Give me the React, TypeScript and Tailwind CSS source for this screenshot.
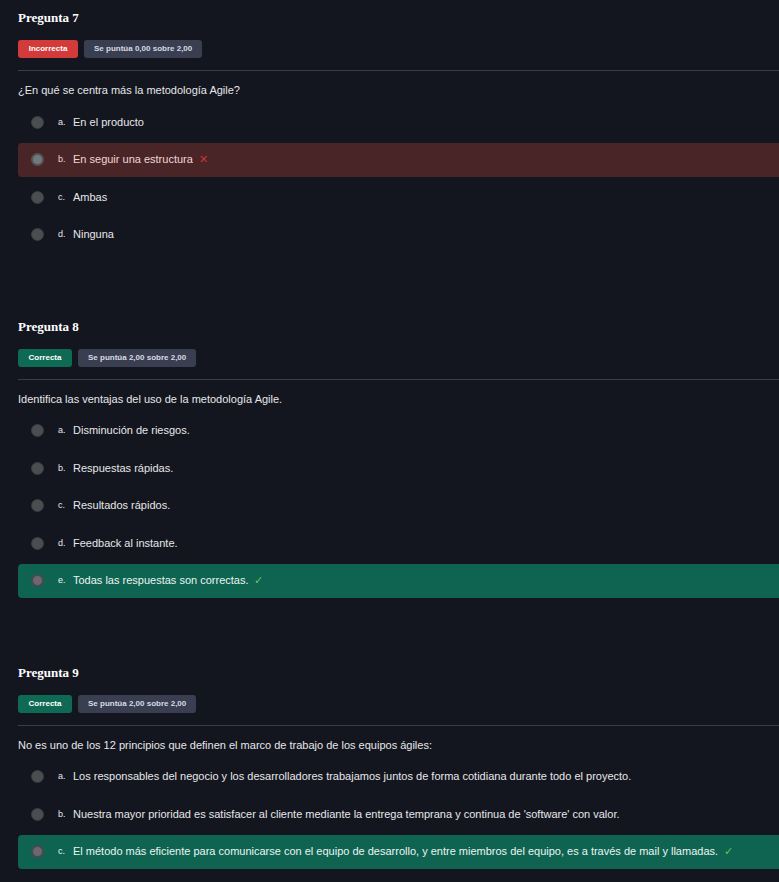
import React from "react";

type Option = { letter: string; text: string; state?: "wrong" | "right" };

type Question = {
  num: number;
  correct: boolean;
  grade: string;
  prompt: string;
  options: Option[];
};

const questions: Question[] = [
  {
    num: 7,
    correct: false,
    grade: "Se puntúa 0,00 sobre 2,00",
    prompt: "¿En qué se centra más la metodología Agile?",
    options: [
      { letter: "a.", text: "En el producto" },
      { letter: "b.", text: "En seguir una estructura", state: "wrong" },
      { letter: "c.", text: "Ambas" },
      { letter: "d.", text: "Ninguna" },
    ],
  },
  {
    num: 8,
    correct: true,
    grade: "Se puntúa 2,00 sobre 2,00",
    prompt: "Identifica las ventajas del uso de la metodología Agile.",
    options: [
      { letter: "a.", text: "Disminución de riesgos." },
      { letter: "b.", text: "Respuestas rápidas." },
      { letter: "c.", text: "Resultados rápidos." },
      { letter: "d.", text: "Feedback al instante." },
      { letter: "e.", text: "Todas las respuestas son correctas.", state: "right" },
    ],
  },
  {
    num: 9,
    correct: true,
    grade: "Se puntúa 2,00 sobre 2,00",
    prompt: "No es uno de los 12 principios que definen el marco de trabajo de los equipos ágiles:",
    options: [
      {
        letter: "a.",
        text: "Los responsables del negocio y los desarrolladores trabajamos juntos de forma cotidiana durante todo el proyecto.",
      },
      {
        letter: "b.",
        text: "Nuestra mayor prioridad es satisfacer al cliente mediante la entrega temprana y continua de 'software' con valor.",
      },
      {
        letter: "c.",
        text: "El método más eficiente para comunicarse con el equipo de desarrollo, y entre miembros del equipo, es a través de mail y llamadas.",
        state: "right",
      },
    ],
  },
];

const Radio = ({ state }: { state?: Option["state"] }) => {
  if (state === "wrong")
    return (
      <span className="size-[13px] rounded-full bg-[#6f7a7c] border-2 border-[#585456] shrink-0" />
    );
  if (state === "right")
    return (
      <span className="size-[13px] rounded-full bg-[#6c6870] border-2 border-[#4b4a50] shrink-0" />
    );
  return <span className="size-[13px] rounded-full bg-[#4c4d51] border border-[#3c3d42] shrink-0" />;
};

const OptionRow = ({ opt }: { opt: Option }) => {
  const box =
    opt.state === "wrong"
      ? "bg-[#4a2527] text-[#f3d6d6]"
      : opt.state === "right"
        ? "bg-[#0f6351] text-[#e9f5f1]"
        : "text-[#e6e7ea]";

  return (
    <div className={`h-[34px] flex items-center pl-[13px] rounded-[4px] ${box}`}>
      <Radio state={opt.state} />
      <span className="ml-[14px] w-[15px] pt-[1px] text-[9px]">{opt.letter}</span>
      <span className="text-[11px] whitespace-nowrap">{opt.text}</span>

      {/* feedback mark */}
      {opt.state === "wrong" && <span className="ml-[6px] text-[11px] text-[#c8343a]">✕</span>}
      {opt.state === "right" && <span className="ml-[6px] text-[11px] text-[#6ec24f]">✓</span>}
    </div>
  );
};

const QuestionBlock = ({ q }: { q: Question }) => (
  <section className="flex flex-col">
    <h2 className="h-[18px] leading-[18px] text-[13px] font-bold text-white font-['Liberation_Serif',serif]">
      Pregunta {q.num}
    </h2>

    <div className="mt-[13px] flex items-center gap-[6px]">
      <span
        className={`h-[18px] rounded-[3px] flex items-center justify-center text-[8px] font-bold text-white ${
          q.correct ? "w-[54px] bg-[#0f6a55]" : "w-[60px] bg-[#d33b3b]"
        }`}>
        {q.correct ? "Correcta" : "Incorrecta"}
      </span>
      <span className="h-[18px] px-[10px] rounded-[3px] bg-[#3a3e51] flex items-center text-[8px] font-bold text-[#d8dae3]">
        {q.grade}
      </span>
    </div>

    <div className="mt-[12px] h-px bg-[#393c4a]" />

    <p className="mt-[12px] h-[14px] leading-[14px] text-[11px] text-[#e6e7ea] whitespace-nowrap">{q.prompt}</p>

    <div className="mt-[8px] flex flex-col gap-[3.5px]">
      {q.options.map((opt) => (
        <OptionRow key={opt.letter} opt={opt} />
      ))}
    </div>
  </section>
);

export default function App() {
  return (
    <div className="min-h-[882px] w-full overflow-hidden bg-[#14161f] font-['Liberation_Sans',sans-serif]">
      <div className="w-[860px] pl-[18px] pt-[9px] flex flex-col gap-[66px]">
        {questions.map((q) => (
          <QuestionBlock key={q.num} q={q} />
        ))}
      </div>
    </div>
  );
}
